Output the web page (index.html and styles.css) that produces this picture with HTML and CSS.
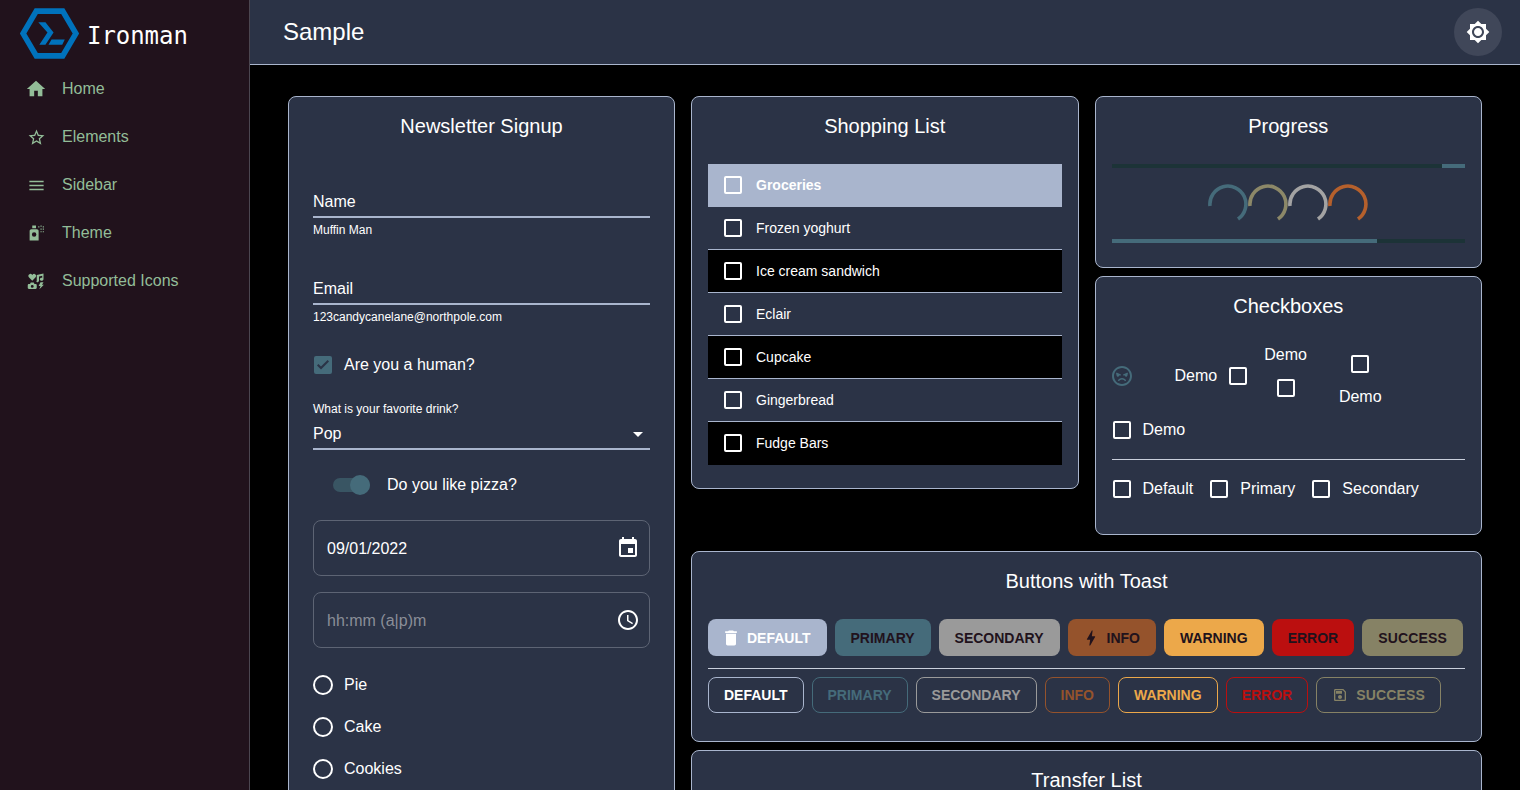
FILE: index.html
```html
<!DOCTYPE html>
<html lang="en">
<head>
    <meta charset="utf-8">
    <title>Ironman</title>
    <link rel="stylesheet" href="styles.css">
</head>
<body>
<div class="app">
    <aside class="sidebar">
        <div class="brand">
            <svg class="brand-logo" viewBox="0 0 58 50"><path d="M16 3h26l13 22-13 22H16L3 25z" fill="none" stroke="#0072bc" stroke-width="5.5"/><path d="M18 14h7l8 10-8 12h-6l8-12zM31 31h13l-2.5 5H28z" fill="#0072bc"/></svg>
            <span class="brand-name">Ironman</span>
        </div>
        <nav>
            <a class="nav-item"><svg class="home" viewBox="0 0 24 24"><path d="M10 20v-6h4v6h5v-8h3L12 3 2 12h3v8z"/></svg><span>Home</span></a>
            <a class="nav-item"><svg class="mid" viewBox="0 0 24 24"><path d="M22 9.240l-7.190-.62L12 2 9.190 8.630 2 9.240l5.460 4.730L5.820 21 12 17.270 18.180 21l-1.630-7.030L22 9.240zM12 15.400l-3.760 2.270 1-4.280-3.320-2.880 4.380-.38L12 6.100l1.710 4.040 4.380.38-3.320 2.880 1 4.280L12 15.400z"/></svg><span>Elements</span></a>
            <a class="nav-item"><svg class="mid" viewBox="0 0 24 24"><path d="M3 18h18v-2H3v2zm0-5h18v-2H3v2zm0-7v2h18V6H3z"/></svg><span>Sidebar</span></a>
            <a class="nav-item"><svg class="fa" viewBox="0 0 24 24"><path fill-rule="evenodd" d="M7 2h5v3.500H7zM6 7h7c1.500 0 2.500 1 2.500 2.500V22h-12V9.500C3.500 8 4.500 7 6 7zm3.500 4a3 3 0 1 0 0 6 3 3 0 0 0 0-6z"/><path d="M15 3h1.500v1.500H15zM18 2h1.500v1.500H18zM21 3h1.500v1.500H21zM18 6h1.500v1.500H18zM21 6h1.500v1.500H21zM18 9.500h1.500V11H18zM21 9.500h1.500V11H21z"/></svg><span>Theme</span></a>
            <a class="nav-item"><svg class="fa" viewBox="0 0 24 24"><path d="M7 11.500L2.500 7C1 5.300 1.900 2.800 4 2.500c1.300-.1 2.300.5 3 1.500.7-1 1.700-1.600 3-1.500 2.100.3 3 2.800 1.500 4.500zM22 2v7.500c0 1.200-1.200 2-2.500 2s-2.500-.8-2.500-2 1.200-2 2.500-2c.3 0 .6 0 .8.100V5l-4.300 1v5.500c0 1.200-1.200 2-2.500 2-.4 0-.8-.1-1.100-.2.3-.5.600-1.100.6-1.600V4z"/><path fill-rule="evenodd" d="M5 14h4l1 2h1.500c.8 0 1.500.7 1.500 1.500V21c0 .8-.7 1.500-1.500 1.500H2.500C1.700 22.500 1 21.800 1 21v-3.500c0-.8.700-1.500 1.500-1.500H4zm2 3.300a1.900 1.900 0 1 0 0 3.800 1.900 1.900 0 0 0 0-3.800z"/><path d="M18 13.500h4l-2 3.500h2.500l-6 6 1.500-4.500h-2.500z"/></svg><span>Supported Icons</span></a>
        </nav>
    </aside>

    <div class="main">
        <header class="topbar">
            <h1>Sample</h1>
            <button class="theme-btn"><svg viewBox="0 0 24 24"><path d="M20 8.690V4h-4.690L12 .69 8.690 4H4v4.690L.69 12 4 15.310V20h4.690L12 23.310 15.310 20H20v-4.690L23.310 12 20 8.690zM12 18c-3.310 0-6-2.690-6-6s2.690-6 6-6 6 2.690 6 6-2.690 6-6 6zm0-10c-2.210 0-4 1.790-4 4s1.790 4 4 4 4-1.790 4-4-1.790-4-4-4z"/></svg></button>
        </header>

        <div class="content">
            <section class="card newsletter">
                <h2>Newsletter Signup</h2>
                <div class="field first">
                    <div class="field-input">Name</div>
                    <div class="helper">Muffin Man</div>
                </div>
                <div class="field">
                    <div class="field-input">Email</div>
                    <div class="helper">123candycanelane@northpole.com</div>
                </div>
                <label class="check human">
                    <span class="box-wrap"><span class="box checked"><svg viewBox="0 0 18 18"><path d="M7 13.400L3 9.400l1.400-1.400L7 10.600l6.600-6.600L15 5.400z"/></svg></span></span>
                    Are you a human?
                </label>
                <div class="small-label">What is your favorite drink?</div>
                <div class="select">Pop<span class="caret"></span></div>
                <div class="switch-row">
                    <span class="switch"><span class="thumb"></span></span>
                    Do you like pizza?
                </div>
                <div class="outline-input">09/01/2022
                    <svg viewBox="0 0 24 24"><path d="M17 12h-5v5h5v-5zM16 1v2H8V1H6v2H5c-1.110 0-1.990.9-1.990 2L3 19c0 1.100.89 2 2 2h14c1.100 0 2-.9 2-2V5c0-1.100-.9-2-2-2h-1V1h-2zm3 18H5V8h14v11z"/></svg>
                </div>
                <div class="outline-input placeholder">hh:mm (a|p)m
                    <svg viewBox="0 0 24 24"><path d="M11.990 2C6.470 2 2 6.480 2 12s4.470 10 9.990 10C17.520 22 22 17.520 22 12S17.520 2 11.990 2zM12 20c-4.420 0-8-3.580-8-8s3.580-8 8-8 8 3.580 8 8-3.580 8-8 8zm.5-13H11v6l5.250 3.150.75-1.230-4.500-2.670z"/></svg>
                </div>
                <div class="radios">
                    <label class="check"><span class="box-wrap"><span class="radio"></span></span>Pie</label>
                    <label class="check"><span class="box-wrap"><span class="radio"></span></span>Cake</label>
                    <label class="check"><span class="box-wrap"><span class="radio"></span></span>Cookies</label>
                </div>
            </section>

            <div class="right">
                <div class="right-top">
                    <section class="card shopping">
                        <h2>Shopping List</h2>
                        <ul class="list">
                            <li class="selected"><span class="box"></span>Groceries</li>
                            <li><span class="box"></span>Frozen yoghurt</li>
                            <li class="dark"><span class="box"></span>Ice cream sandwich</li>
                            <li><span class="box"></span>Eclair</li>
                            <li class="dark"><span class="box"></span>Cupcake</li>
                            <li><span class="box"></span>Gingerbread</li>
                            <li class="dark last"><span class="box"></span>Fudge Bars</li>
                        </ul>
                    </section>
                    <div class="stack">
                        <section class="card progress">
                            <h2>Progress</h2>
                            <div class="bar"><span class="bar-fill indeterminate"></span></div>
                            <div class="spinners">
                                <svg viewBox="0 0 40 40" stroke="#456b7a"><path d="M2 22A18 18 0 1 1 30 35"/></svg>
                                <svg viewBox="0 0 40 40" stroke="#8c8868"><path d="M2 22A18 18 0 1 1 30 35"/></svg>
                                <svg viewBox="0 0 40 40" stroke="#a3a3a3"><path d="M2 22A18 18 0 1 1 30 35"/></svg>
                                <svg viewBox="0 0 40 40" stroke="#b5602c"><path d="M2 22A18 18 0 1 1 30 35"/></svg>
                            </div>
                            <div class="bar"><span class="bar-fill determinate"></span></div>
                        </section>
                        <section class="card checkboxes">
                            <h2>Checkboxes</h2>
                            <div class="check-wrap">
                                <label class="check"><span class="box-wrap"><svg class="mad" viewBox="0 0 24 24"><path d="M11.990 2C6.470 2 2 6.470 2 12s4.470 10 9.990 10S22 17.530 22 12 17.520 2 11.990 2zM12 20c-4.420 0-8-3.580-8-8s3.580-8 8-8 8 3.580 8 8-3.580 8-8 8zM6.500 8.500l4.500 2-.6 1.300-1-.45c-.1.800-.700 1.400-1.400 1.400-.8 0-1.500-.7-1.500-1.500 0-.3.050-.5.150-.7l-.75-.35zM17.500 8.500l-4.500 2 .6 1.300 1-.45c.1.800.700 1.400 1.400 1.400.8 0 1.500-.7 1.500-1.500 0-.3-.05-.5-.15-.7l.75-.35zM12 14c-1.900 0-3.500 1.100-4.200 2.700l1.300.6c.5-1.100 1.600-1.800 2.900-1.800s2.400.7 2.900 1.800l1.300-.6C15.500 15.100 13.900 14 12 14z"/></svg></span></label>
                                <label class="check start"><span class="box-wrap"><span class="box"></span></span>Demo</label>
                                <label class="check top"><span class="box-wrap"><span class="box"></span></span>Demo</label>
                                <label class="check bottom"><span class="box-wrap"><span class="box"></span></span>Demo</label>
                                <label class="check"><span class="box-wrap"><span class="box"></span></span>Demo</label>
                            </div>
                            <hr>
                            <div class="check-row">
                                <label class="check"><span class="box-wrap"><span class="box"></span></span>Default</label>
                                <label class="check"><span class="box-wrap"><span class="box"></span></span>Primary</label>
                                <label class="check"><span class="box-wrap"><span class="box"></span></span>Secondary</label>
                            </div>
                        </section>
                    </div>
                </div>

                <section class="card buttons">
                    <h2>Buttons with Toast</h2>
                    <div class="btn-row">
                        <button class="btn fill-default"><svg viewBox="0 0 24 24"><path d="M6 19c0 1.100.9 2 2 2h8c1.100 0 2-.9 2-2V7H6v12zM19 4h-3.500l-1-1h-5l-1 1H5v2h14V4z"/></svg>Default</button>
                        <button class="btn fill-primary">Primary</button>
                        <button class="btn fill-secondary">Secondary</button>
                        <button class="btn fill-info"><svg viewBox="0 0 24 24"><path d="M11 21h-1l1-7H7.500c-.58 0-.57-.32-.38-.66.19-.34.05-.08.07-.12C8.480 10.940 10.420 7.540 13 3h1l-1 7h3.500c.49 0 .56.33.47.51l-.07.15C12.960 17.550 11 21 11 21z"/></svg>Info</button>
                        <button class="btn fill-warning">Warning</button>
                        <button class="btn fill-error">Error</button>
                        <button class="btn fill-success">Success</button>
                    </div>
                    <hr class="btn-divider">
                    <div class="btn-row">
                        <button class="btn line-default">Default</button>
                        <button class="btn line-primary">Primary</button>
                        <button class="btn line-secondary">Secondary</button>
                        <button class="btn line-info">Info</button>
                        <button class="btn line-warning">Warning</button>
                        <button class="btn line-error">Error</button>
                        <button class="btn line-success"><svg viewBox="0 0 24 24"><path d="M17 3H5c-1.110 0-2 .9-2 2v14c0 1.100.89 2 2 2h14c1.100 0 2-.9 2-2V7l-4-4zm2 16H5V5h11.170L19 7.830V19zm-7-7c-1.660 0-3 1.340-3 3s1.340 3 3 3 3-1.340 3-3-1.340-3-3-3zM6 6h9v4H6z"/></svg>Success</button>
                    </div>
                </section>

                <section class="card transfer">
                    <h2>Transfer List</h2>
                </section>
            </div>
        </div>
    </div>
</div>
</body>
</html>
```

FILE: styles.css
```css
* {
    box-sizing: border-box;
}

body {
    margin: 0;
    font-family: "Liberation Sans", Arial, sans-serif;
    font-size: 16px;
    color: white;
    background-color: black;
}

.app {
    display: flex;
    height: 100vh;
    overflow: hidden;
}

/* sidebar */
.sidebar {
    width: 250px;
    flex-shrink: 0;
    background-color: #21121c;
    border-right: 1px solid #4b4650;
}

.brand {
    display: flex;
    align-items: center;
    height: 65px;
    padding: 6px 0 0 20px;
}

.brand-logo {
    width: 59px;
    height: 51px;
    margin-top: -5px;
}

.brand-name {
    font-family: "DejaVu Sans Mono", monospace;
    font-size: 24px;
    margin-left: 8px;
    letter-spacing: -0.05px;
}

.nav-item {
    display: flex;
    align-items: center;
    height: 48px;
    padding-left: 24px;
    color: #93bd98;
}

.nav-item svg {
    width: 24px;
    height: 24px;
    margin-right: 14px;
    fill: #93bd98;
}

.nav-item svg.home {
    width: 22px;
    height: 22px;
    margin: 0 15px 0 1px;
}

.nav-item svg.mid {
    width: 19px;
    height: 19px;
    margin: 0 16px 0 3px;
}

.nav-item svg.fa {
    width: 18px;
    height: 18px;
    margin: 0 17px 0 3px;
}

/* top bar */
.main {
    flex: 1;
    min-width: 0;
    display: flex;
    flex-direction: column;
}

.topbar {
    display: flex;
    align-items: center;
    justify-content: space-between;
    height: 65px;
    flex-shrink: 0;
    padding: 0 18px 1px 33px;
    background-color: #2b3346;
    border-bottom: 1px solid #a9b5cd;
}

.topbar h1 {
    margin: 0;
    font-size: 24px;
    font-weight: normal;
}

.theme-btn {
    display: flex;
    align-items: center;
    justify-content: center;
    width: 48px;
    height: 48px;
    padding: 0;
    border: none;
    border-radius: 50%;
    background-color: #404759;
}

.theme-btn svg {
    width: 24px;
    height: 24px;
    fill: white;
}

/* cards */
.content {
    display: grid;
    grid-template-columns: 387px 1fr;
    gap: 16px;
    align-items: start;
    padding: 31px 38px 0;
}

.card {
    background-color: #2b3346;
    border: 1px solid #a9b5cd;
    border-radius: 8px;
    padding: 16px 16px 24px;
}

.card h2 {
    margin: 0 0 25px;
    font-size: 20px;
    font-weight: normal;
    line-height: 26px;
    text-align: center;
}

.newsletter {
    min-height: 760px;
    padding: 16px 24px 24px;
}

.right {
    min-width: 0;
    display: flex;
    flex-direction: column;
    gap: 8px;
}

.right-top {
    display: grid;
    grid-template-columns: 1fr 1fr;
    gap: 16px;
    align-items: start;
    margin-bottom: 8px;
}

.stack {
    display: flex;
    flex-direction: column;
    gap: 8px;
}

/* newsletter form */
.field {
    margin-top: 38px;
}

.field.first {
    margin-top: 50px;
}

.field-input {
    line-height: 26px;
    padding-bottom: 1px;
    border-bottom: 2px solid #a9b5cd;
}

.helper {
    font-size: 12px;
    line-height: 16px;
    margin-top: 4px;
}

.check {
    display: inline-flex;
    align-items: center;
    line-height: 24px;
    margin: 0 16px 0 -11px;
}

.box-wrap {
    display: flex;
    align-items: center;
    justify-content: center;
    width: 42px;
    height: 42px;
    flex-shrink: 0;
}

.box {
    display: block;
    width: 18px;
    height: 18px;
    flex-shrink: 0;
    border: 2px solid white;
    border-radius: 2px;
}

.box.checked {
    border: none;
    background-color: #456b7a;
}

.box.checked svg {
    display: block;
    fill: #2b3346;
}

.human {
    margin-top: 19px;
    display: flex;
}

.small-label {
    font-size: 12px;
    line-height: 16px;
    margin-top: 15px;
}

.select {
    position: relative;
    line-height: 26px;
    margin-top: 4px;
    padding-bottom: 1px;
    border-bottom: 2px solid #a9b5cd;
}

.caret {
    position: absolute;
    right: 7px;
    top: 11px;
    border-left: 5px solid transparent;
    border-right: 5px solid transparent;
    border-top: 5px solid white;
}

.switch-row {
    display: flex;
    align-items: center;
    height: 38px;
    margin-top: 16px;
    padding-left: 20px;
    gap: 17px;
}

.switch {
    position: relative;
    display: block;
    width: 37px;
    height: 14px;
    border-radius: 7px;
    background-color: #395563;
}

.thumb {
    position: absolute;
    right: 0;
    top: -3px;
    width: 20px;
    height: 20px;
    border-radius: 50%;
    background-color: #456b7a;
}

.outline-input {
    display: flex;
    align-items: center;
    justify-content: space-between;
    height: 56px;
    margin-top: 16px;
    padding: 2px 9px 0 13px;
    border: 1px solid #5d6474;
    border-radius: 8px;
}

.outline-input svg {
    width: 24px;
    height: 24px;
    margin-top: -2px;
    fill: white;
}

.placeholder {
    color: #8a8e98;
}

.radios {
    margin-top: 16px;
}

.radios .check {
    display: flex;
}

.radio {
    display: block;
    width: 20px;
    height: 20px;
    border: 2px solid white;
    border-radius: 50%;
}

/* shopping list */
.shopping {
    padding-bottom: 23px;
}

.list {
    list-style: none;
    margin: 0;
    padding: 0;
}

.list li {
    display: flex;
    align-items: center;
    height: 43px;
    padding-left: 16px;
    font-size: 14px;
    gap: 14px;
    background-color: #2b3346;
    border-bottom: 1px solid #a9b5cd;
}

.list li.selected {
    background-color: #a9b5cd;
    font-weight: bold;
}

.list li.dark {
    background-color: black;
}

.list li.last {
    border-bottom-color: black;
}

/* progress */
.bar {
    height: 4px;
    background-color: #1c3337;
}

.bar-fill {
    display: block;
    height: 100%;
    background-color: #456b7a;
}

.bar-fill.indeterminate {
    width: 23px;
    margin-left: auto;
}

.bar-fill.determinate {
    width: 75%;
}

.spinners {
    display: flex;
    justify-content: center;
    height: 71px;
    padding-top: 16px;
}

.spinners svg {
    width: 40px;
    height: 40px;
    fill: none;
    stroke-width: 3.6;
}

/* checkboxes */
.check-wrap {
    display: flex;
    flex-wrap: wrap;
    align-items: center;
    margin-top: -1px;
}

.check.start {
    flex-direction: row-reverse;
    margin: 0 -11px 0 16px;
}

.check.top {
    flex-direction: column-reverse;
    margin: 0 16px;
}

.check.bottom {
    flex-direction: column;
    margin: 0 16px;
}

.mad {
    width: 24px;
    height: 24px;
    fill: #456b7a;
}

hr {
    height: 1px;
    margin: 8px 0;
    border: none;
    background-color: #c9cfdb;
}

.check-row {
    display: flex;
}

/* buttons */
.buttons {
    padding-bottom: 28px;
}

.btn-row {
    display: flex;
    gap: 8px;
}

.btn {
    display: flex;
    align-items: center;
    height: 37px;
    padding: 0 16px;
    font-family: inherit;
    font-size: 14px;
    font-weight: bold;
    text-transform: uppercase;
    white-space: nowrap;
    border: none;
    border-radius: 8px;
    color: #21121c;
    background: none;
}

.btn svg {
    width: 20px;
    height: 20px;
    margin: 0 6px 0 -3px;
    fill: currentColor;
}

.btn-divider {
    margin: 12px 0 8px;
}

.fill-default { background-color: #a9b5cd; color: white; }
.fill-primary { background-color: #456b7a; }
.fill-secondary { background-color: #9a9a9a; }
.fill-info { background-color: #95532c; }
.fill-warning { background-color: #eca84a; }
.fill-error { background-color: #bb0f0f; }
.fill-success { background-color: #868265; letter-spacing: 0.15px; }

.btn[class*="line-"] {
    height: 36px;
    padding: 0 15px;
    border: 1px solid;
}

.btn.line-success svg {
    width: 16px;
    height: 16px;
    margin: 0 8px 0 0;
}

.line-default { color: white; border-color: #a9b5cd !important; }
.line-primary { color: #456b7a; }
.line-secondary { color: #9a9a9a; }
.line-info { color: #95532c; }
.line-warning { color: #eca84a; }
.line-error { color: #bb0f0f; }
.line-success { color: #868265; letter-spacing: 0.15px; }

.transfer {
    height: 300px;
}
```
